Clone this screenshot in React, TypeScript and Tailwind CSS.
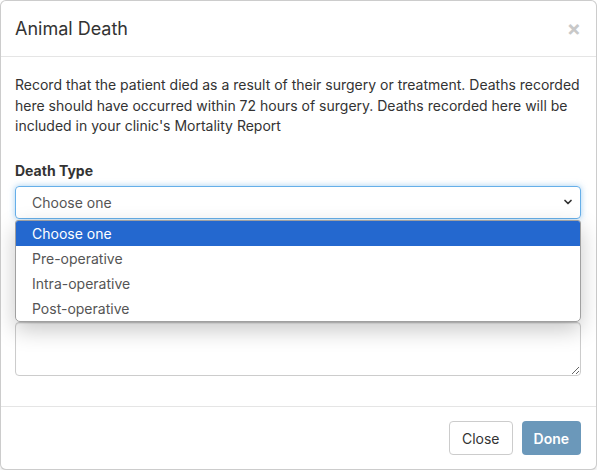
import { ChevronDown } from "lucide-react";

const font = { fontFamily: "Inter, 'Noto Sans', sans-serif" };

const options = ["Choose one", "Pre-operative", "Intra-operative", "Post-operative"];

export default function App() {
  return (
    <div className="h-[470px] w-[597px] bg-white text-[#333]" style={font}>
      <div className="flex h-full flex-col rounded-md border border-black/20 bg-white shadow-md">
        {/* Header */}
        <div className="flex h-[56px] items-center justify-between border-b border-[#e5e5e5] pl-[14px] pr-[15px]">
          <h4 className="text-[18px] leading-[1.1] text-[#333]">Animal Death</h4>
          <button className="text-[21px] font-bold leading-none text-[#c8c8c8]">×</button>
        </div>

        {/* Body */}
        <div className="flex-1 pl-[14px] pr-[15px] pt-[18px]">
          <p className="text-[14px] leading-[20.5px] text-[#333]">
            Record that the patient died as a result of their surgery or treatment. Deaths recorded
            here should have occurred within 72 hours of surgery. Deaths recorded here will be
            included in your clinic's Mortality Report
          </p>

          <div className="mt-[24px]">
            <label className="mb-[5px] block text-[14px] font-bold leading-[20px] text-[#333]">
              Death Type
            </label>
            <div className="relative">
              <div className="flex h-[33px] items-center justify-between rounded-[4px] border border-[#66afe9] pl-4 pr-[6px] text-[14px] text-[#555] shadow-[0_0_6px_rgba(102,175,233,0.6)]">
                <span>Choose one</span>
                <ChevronDown size={12} strokeWidth={3.5} className="text-[#333]" />
              </div>

              {/* Open option list */}
              <div className="absolute left-0 right-0 top-[34px] z-10 overflow-hidden rounded-b-[5px] rounded-t-[3px] border border-[#a0a0a0] bg-white shadow-[0_8px_22px_rgba(0,0,0,0.22)]">
                {options.map((o, i) => (
                  <div
                    key={o}
                    className={
                      i === 0
                        ? "flex h-[25px] items-center bg-[#2468cf] pl-4 text-[14px] text-white"
                        : "flex h-[25px] items-center pl-4 text-[14px] text-[#555]"
                    }
                  >
                    {o}
                  </div>
                ))}
              </div>
            </div>
          </div>

          {/* Notes field, its label sits under the open list */}
          <div className="mt-[103px]">
            <textarea className="block h-[54px] w-full resize-y rounded-[4px] border border-[#ccc] bg-white shadow-[inset_0_1px_1px_rgba(0,0,0,0.075)] outline-none" />
          </div>
        </div>

        {/* Footer */}
        <div className="flex h-[63px] items-center justify-end gap-[9px] border-t border-[#e5e5e5] px-[15px]">
          <button className="h-[34px] rounded-[4px] border border-[#ccc] bg-white px-3 text-[14px] text-[#333]">
            Close
          </button>
          <button className="h-[34px] rounded-[4px] bg-[#6b98ba] px-3 text-[14px] font-semibold text-white">
            Done
          </button>
        </div>
      </div>
    </div>
  );
}
